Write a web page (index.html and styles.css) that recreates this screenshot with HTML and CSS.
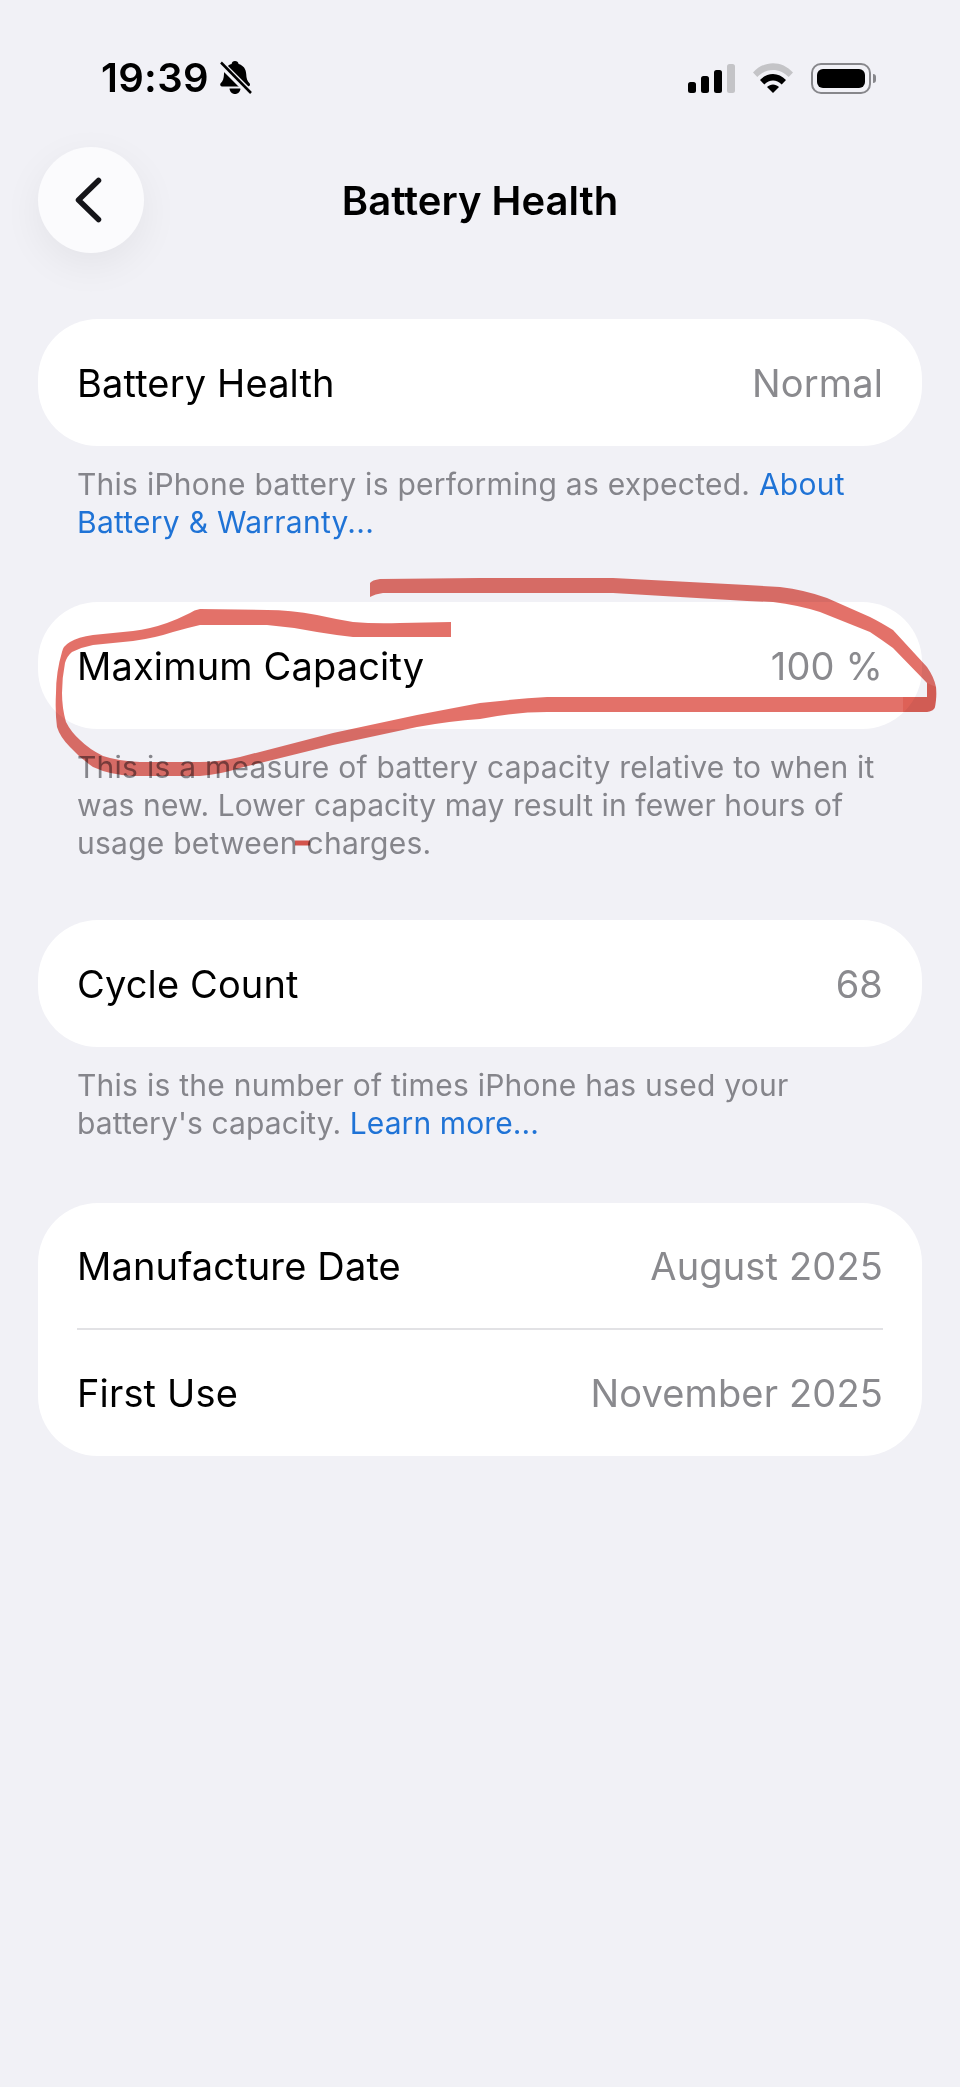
FILE: index.html
```html
<!DOCTYPE html>
<html lang="en">
  <head>
    <meta charset="UTF-8" />
    <meta name="viewport" content="width=device-width, initial-scale=1.0" />
    <title>Battery Health</title>
    <link rel="stylesheet" href="styles.css">
  </head>
  <body>
    <div class="screen">
      <div class="status-bar">
        <div class="status-left">
          <span class="time">19:39</span>
          <svg class="bell" viewBox="0 0 32 34" width="32" height="34">
            <path d="M15 0c2 0 3.300 1.300 3.600 3 4.700 1.300 7.400 5 7.600 10 .2 4.600 1 7 3.300 9.300 1 1 .5 3.200-1.300 3.200H2c-1.800 0-2.300-2.200-1.300-3.200C3 20 3.800 17.600 4 13c.2-5 2.900-8.700 7.600-10C11.900 1.300 13 0 15 0z" fill="#000" />
            <path d="M9.500 27.500h11c-.3 3.300-2.600 5.500-5.500 5.500s-5.200-2.200-5.500-5.500z" fill="#000" />
            <path d="M1 3l30 30" stroke="#f1f1f6" stroke-width="7" fill="none" />
            <path d="M1 1.500l30 30.500" stroke="#000" stroke-width="2.500" fill="none" />
          </svg>
        </div>
        <div class="status-right">
          <svg class="signal" viewBox="0 0 47 29" width="47" height="29">
            <rect x="0" y="18" width="8" height="11" rx="2.500" fill="#000" />
            <rect x="13" y="12" width="8" height="17" rx="2.500" fill="#000" />
            <rect x="26" y="6" width="8" height="23" rx="2.500" fill="#000" />
            <rect x="39" y="0" width="8" height="29" rx="2.500" fill="#c4c4c7" />
          </svg>
          <svg class="wifi" viewBox="0 0 40 30" width="40" height="30">
            <path d="M0 9.500C11-3 29-3 40 9.500l-4.300 4.600C26.500 4.500 13.500 4.500 4.300 14.100z" fill="#c4c4c7" />
            <path d="M7 17C14.500 9 25.500 9 33 17l-4.300 4.500C23.500 16 16.500 16 11.300 21.500z" fill="#000" />
            <path d="M14 24c3.500-3.400 8.500-3.400 12 0l-6 6z" fill="#000" />
          </svg>
          <div class="battery">
            <div class="battery-body"><div class="battery-fill"></div></div>
            <div class="battery-nub"></div>
          </div>
        </div>
      </div>

      <div class="nav">
        <button type="button" class="back">
          <svg viewBox="0 0 28 46" width="28" height="46">
            <path d="M24.500 3.500L4.500 23l20 19.500" stroke="#15151a" stroke-width="5.500" stroke-linecap="round" stroke-linejoin="round" fill="none" />
          </svg>
        </button>
        <h1 class="title">Battery Health</h1>
      </div>

      <div class="section">
        <div class="card">
          <div class="row">
            <span class="label">Battery Health</span>
            <span class="value">Normal</span>
          </div>
        </div>
        <p class="note">This iPhone battery is performing as expected. <a class="link">About</a><br /><a class="link">Battery &amp; Warranty...</a></p>
      </div>

      <div class="section">
        <div class="card">
          <div class="row">
            <span class="label">Maximum Capacity</span>
            <span class="value">100 %</span>
          </div>
        </div>
        <p class="note">This is a measure of battery capacity relative to when it<br /><span class="tight">was new. Lower capacity may result in fewer hours of</span><br />usage between charges.</p>
      </div>

      <div class="section section-close">
        <div class="card">
          <div class="row">
            <span class="label">Cycle Count</span>
            <span class="value">68</span>
          </div>
        </div>
        <p class="note">This is the number of times iPhone has used your<br /><span class="tight">battery's capacity. </span><a class="link tight">Learn more...</a></p>
      </div>

      <div class="section">
        <div class="card">
          <div class="row row-split">
            <span class="label">Manufacture Date</span>
            <span class="value">August 2025</span>
          </div>
          <div class="row row-last">
            <span class="label">First Use</span>
            <span class="value">November 2025</span>
          </div>
        </div>
      </div>

      <!-- hand drawn marker on top of the screenshot, the pen is thin on verticals so it is a filled shape -->
      <svg class="marker" viewBox="0 0 960 2087" width="960" height="2087">
        <path class="marker-ink" d="M451 622L400 623Q375 624 353 622Q335 619 317 615Q290 610 267 610L200 609Q194 610 190 613Q178 619 167 623Q150 629 133 631L93 635Q78 637 70 642Q63 646 62 652Q56 672 56 693Q55 712 57 727Q60 737 70 747Q80 758 93 767Q110 775 133 776L200 776Q222 774 240 768L333 745L417 727Q450 721 480 719Q515 712 547 712L927 712Q934 711 935 707Q937 697 936 687Q934 677 927 667L893 630Q880 622 870 617L827 598Q805 590 780 587L747 585L613 578L480 578L380 579Q372 580 370 583L370 597Q375 594 383 593L480 593L613 593L747 601L773 602Q798 605 820 612L870 632Q882 640 893 648L927 683L927 697L547 697Q515 699 480 703L417 715L333 733L240 757Q220 762 200 762L140 762Q118 761 103 756Q89 749 80 740Q71 732 66 722Q62 708 62 693Q62 678 65 663Q67 656 72 652Q82 647 93 645L133 641Q155 638 173 632Q187 628 200 625L267 625Q292 627 317 632Q335 635 353 637L451 637Z" />
        <path class="marker-overlap" d="M903 697L927 697L927 683L936 687Q937 697 935 707Q934 711 927 712L903 712Z" />
        <path class="marker-dash" d="M295 843L310 843" />
      </svg>
    </div>
  </body>
</html>
```

FILE: styles.css
```css
* {
  box-sizing: border-box;
}

html,
body {
  margin: 0;
  padding: 0;
  background-color: #f1f1f6;
}

body {
  font-family: "Inter", "Liberation Sans", sans-serif;
  color: #000;
}

.screen {
  position: relative;
  width: 960px;
  height: 2087px;
  overflow: hidden;
  padding: 0 38px;
}

.status-bar {
  display: flex;
  justify-content: space-between;
  align-items: center;
  height: 34px;
  margin-top: 61px;
  padding: 0 46px 0 63px;
}

.status-left {
  display: flex;
  align-items: center;
  gap: 11px;
}

.time {
  font-size: 40px;
  font-weight: 600;
  letter-spacing: 0.3px;
  line-height: 34px;
}

.status-right {
  display: flex;
  align-items: center;
  gap: 18px;
}

.battery {
  display: flex;
  align-items: center;
  gap: 2px;
}

.battery-body {
  width: 60px;
  height: 31px;
  padding: 4px;
  border: 2.5px solid #87878b;
  border-radius: 10px;
}

.battery-fill {
  width: 100%;
  height: 100%;
  background-color: #000;
  border-radius: 6px;
}

.battery-nub {
  width: 3px;
  height: 9px;
  background-color: #87878b;
  border-radius: 0 3px 3px 0;
}

.nav {
  position: relative;
  display: flex;
  justify-content: center;
  align-items: center;
  height: 106px;
  margin-top: 52px;
  padding-top: 2px;
}

.back {
  position: absolute;
  left: 0;
  top: 0;
  width: 106px;
  height: 106px;
  padding: 0 6px 0 0;
  display: flex;
  justify-content: center;
  align-items: center;
  border: none;
  border-radius: 50%;
  background-color: #fbfbfd;
  box-shadow: 0 12px 40px rgba(0, 0, 0, 0.06);
}

.title {
  margin: 0;
  font-size: 40px;
  font-weight: 600;
  line-height: 46px;
}

.section {
  margin-top: 61px;
}

.nav + .section {
  margin-top: 66px;
}

.section-close {
  margin-top: 58px;
}

.card {
  background-color: #fff;
  border-radius: 60px;
  padding: 0 39px;
}

.row {
  display: flex;
  justify-content: space-between;
  align-items: center;
  height: 127px;
  font-size: 38px;
  letter-spacing: 0.15px;
}

.row-split {
  border-bottom: 2px solid #e2e2e5;
}

.row-last {
  height: 126px;
}

.value {
  color: #8a8a8e;
}

.note {
  margin: 19px 0 0;
  padding: 0 39px;
  font-size: 30px;
  line-height: 38px;
  letter-spacing: 0.25px;
  color: #85858b;
}

.tight {
  letter-spacing: 0.1px;
}

.link {
  color: #1f73d6;
}

.marker {
  position: absolute;
  left: 0;
  top: 0;
  pointer-events: none;
  mix-blend-mode: multiply;
}

.marker-ink {
  fill: #dc4e43;
  opacity: 0.8;
}

.marker-overlap {
  fill: #cf3b30;
  opacity: 0.3;
}

.marker-dash {
  fill: none;
  stroke: #e0594f;
  stroke-width: 5;
}
```
